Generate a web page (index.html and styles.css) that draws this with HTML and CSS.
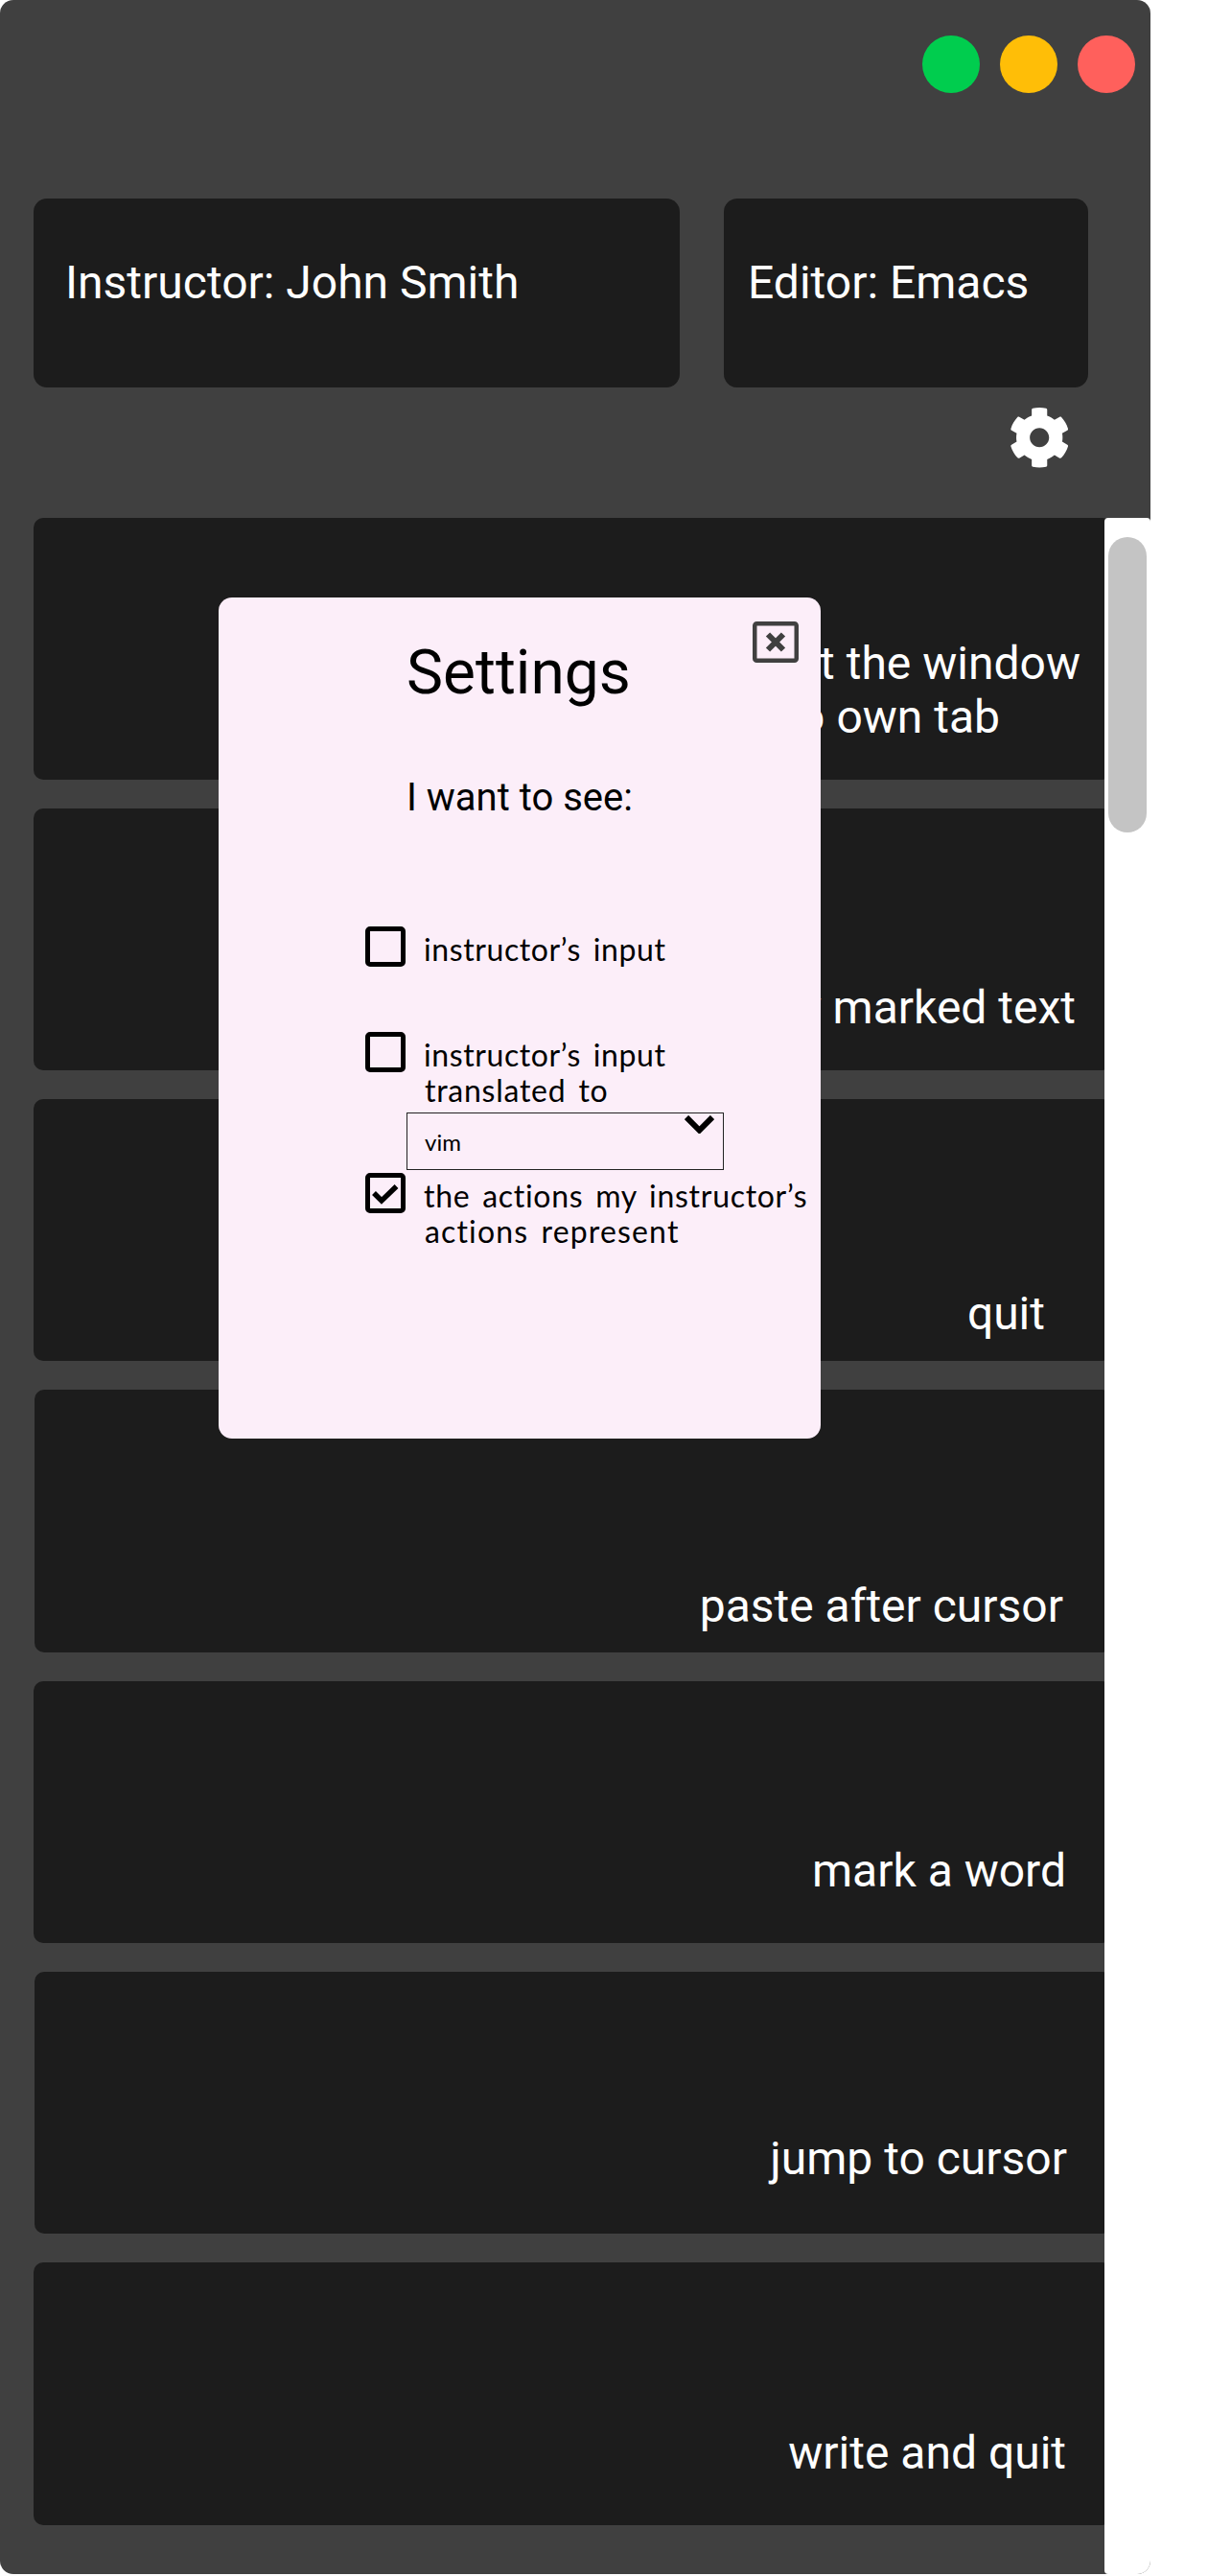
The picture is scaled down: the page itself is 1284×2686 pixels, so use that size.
FILE: index.html
```html
<!DOCTYPE html>
<html lang="en">
<head>
<meta charset="utf-8">
<title>Editor session</title>
<link rel="stylesheet" href="styles.css">
</head>
<body>
<main class="window">
  <div class="titlebar">
    <span class="dot dot-green"></span>
    <span class="dot dot-yellow"></span>
    <span class="dot dot-red"></span>
  </div>
  <header class="info">
    <div class="card card-instructor">Instructor: John Smith</div>
    <div class="card card-editor">Editor: Emacs</div>
  </header>
  <div class="toolbar">
    <svg class="gear" viewBox="0 0 512 512"><path fill="#fff" d="M487.4 315.7l-42.6-24.6c4.3-23.2 4.3-47 0-70.2l42.6-24.6c4.9-2.8 7.1-8.6 5.5-14-11.1-35.6-30-67.8-54.7-94.6-3.8-4.1-10-5.1-14.8-2.3L380.8 110c-17.9-15.4-38.5-27.3-60.8-35.1V25.8c0-5.6-3.9-10.5-9.4-11.7-36.7-8.2-74.3-7.8-109.2 0-5.5 1.2-9.4 6.1-9.4 11.7V75c-22.2 7.9-42.8 19.8-60.8 35.1L88.7 85.5c-4.9-2.8-11-1.9-14.8 2.3-24.7 26.7-43.6 58.9-54.7 94.6-1.7 5.4.6 11.2 5.5 14L67.3 221c-4.3 23.2-4.3 47 0 70.2l-42.6 24.6c-4.9 2.8-7.1 8.6-5.5 14 11.1 35.6 30 67.8 54.7 94.6 3.8 4.1 10 5.1 14.8 2.3l42.6-24.6c17.9 15.4 38.5 27.3 60.8 35.1v49.2c0 5.6 3.9 10.5 9.4 11.7 36.7 8.2 74.3 7.8 109.2 0 5.500-1.200 9.400-6.100 9.400-11.700v-49.200c22.200-7.900 42.800-19.800 60.800-35.100l42.600 24.600c4.900 2.800 11 1.900 14.800-2.300 24.700-26.700 43.600-58.900 54.700-94.600 1.500-5.500-.7-11.300-5.600-14.100zM256 336c-44.100 0-80-35.900-80-80s35.900-80 80-80 80 35.900 80 80-35.900 80-80 80z"/></svg>
  </div>
  <div class="content">
    <div class="list">
      <div class="row row-window"><span>put the window</span><span class="second-line">to own tab</span></div>
      <div class="row row-copy">copy marked text</div>
      <div class="row row-quit">quit</div>
      <div class="row row-paste">paste after cursor</div>
      <div class="row row-mark">mark a word</div>
      <div class="row row-jump">jump to cursor</div>
      <div class="row row-write">write and quit</div>
    </div>
    <div class="scrollbar"><div class="thumb"></div></div>
  </div>

  <section class="modal">
    <div class="modal-head">
      <h1 class="modal-title">Settings</h1>
      <svg class="close" viewBox="0 0 48 43" fill="none" stroke="#404040"><rect x="2.25" y="2.25" width="43.5" height="38.5" rx="2" stroke-width="4.5"/><path d="M16 13.500l16 16M32 13.500l-16 16" stroke-width="6"/></svg>
    </div>
    <p class="modal-sub">I want to see:</p>
    <div class="option">
      <span class="box"></span>
      <div class="label"><span class="l1">instructor’s input</span></div>
    </div>
    <div class="option option-translated">
      <span class="box"></span>
      <div class="label"><span class="l1">instructor’s input</span><span class="l2">translated to</span></div>
    </div>
    <div class="select">
      <span>vim</span>
      <svg class="chevron" viewBox="0 0 31 19" fill="none" stroke="#000"><path d="M2 2l13.500 13.500L29 2" stroke-width="6"/></svg>
    </div>
    <div class="option option-actions">
      <span class="box"><svg class="check" viewBox="0 0 32 32" fill="none" stroke="#000"><path d="M4 16l8 8L27.500 9" stroke-width="5.500"/></svg></span>
      <div class="label"><span class="l3">the actions my instructor’s</span><span class="l4">actions represent</span></div>
    </div>
  </section>
</main>
</body>
</html>
```
FILE: styles.css
```css
* { box-sizing: border-box; }

body {
  margin: 0;
  background: #fff;
  font-family: Roboto, "Liberation Sans", sans-serif;
}

.window {
  position: relative;
  width: 1200px;
  height: 2684px;
  background: #404040;
  border-radius: 14px;
  overflow: hidden;
}

.titlebar {
  display: flex;
  justify-content: flex-end;
  gap: 21px;
  height: 206.5px;
  padding: 37px 16px 0 0;
}

.dot { width: 60px; height: 60px; border-radius: 50%; }
.dot-green { background: #00cd4e; }
.dot-yellow { background: #ffbe07; }
.dot-red { background: #ff605c; }

.info {
  display: flex;
  gap: 46px;
  padding-left: 35px;
}

.card {
  height: 197px;
  padding-top: 60px;
  border-radius: 14px;
  background: #1c1c1c;
  color: #fff;
  font-size: 48px;
  line-height: 56px;
  white-space: nowrap;
}

.card-instructor { width: 674px; padding-left: 33px; }
.card-editor { width: 380px; padding-left: 25px; }

.toolbar {
  display: flex;
  justify-content: flex-end;
  height: 136px;
  padding: 20px 84px 0 0;
}

.gear { width: 64.4px; height: 64.4px; }

.content { display: flex; height: 2144.5px; }

.list {
  flex: 1;
  display: flex;
  flex-direction: column;
  gap: 30px;
  padding-left: 35px;
}

.row {
  display: flex;
  flex-direction: column;
  align-items: flex-end;
  justify-content: flex-end;
  height: 273.33px;
  margin-right: -8px;
  border-radius: 10px;
  background: #1c1c1c;
  color: #fff;
  font-size: 48px;
  line-height: 56px;
  white-space: nowrap;
}

.row-window { padding: 0 33px 37px 0; }
.second-line { margin-right: 84px; }
.row-copy { padding: 0 38px 37px 0; }
.row-quit { padding: 0 70px 21px 0; }
.row-paste { padding: 0 51px 20px 0; margin-left: 1px; }
.row-mark { padding: 0 48px 47px 0; }
.row-jump { padding: 0 47px 50px 0; margin-left: 1px; }
.row-write { padding: 0 48px 47px 0; }

.scrollbar {
  position: relative;
  width: 48px;
  padding: 20px 4px;
  border-radius: 4px 4px 0 4px;
  background: #fff;
}

.thumb { height: 308px; border-radius: 20px; background: #c4c4c4; }

.modal {
  position: absolute;
  top: 623px;
  left: 228px;
  width: 628px;
  height: 877px;
  border-radius: 14px;
  background: #fceef9;
  color: #000;
}

.modal-head {
  display: flex;
  justify-content: space-between;
  padding: 24px 23px 0 196px;
}

.modal-title {
  margin: 17px 0 0;
  font-size: 64px;
  font-weight: 400;
  line-height: 75px;
}

.close { width: 48px; height: 43px; margin-top: 0.5px; }

.modal-sub {
  margin: 69px 0 111px 196px;
  font-size: 40px;
  line-height: 47px;
}

.option {
  display: flex;
  gap: 19px;
  padding-left: 153px;
}

.option-translated { margin-top: 68px; }
.option-actions { margin-top: 3px; }

.box {
  flex: none;
  width: 42px;
  height: 42px;
  border: 5px solid #000;
  border-radius: 5px;
}

.check { display: block; width: 32px; height: 32px; }

.label {
  display: flex;
  flex-direction: column;
  align-items: flex-start;
  padding-top: 5px;
  font-family: Lato, "Liberation Sans", sans-serif;
  font-size: 32px;
  line-height: 37px;
  white-space: nowrap;
}

.l1 { letter-spacing: 0.6px; word-spacing: 4px; }
.l2 { margin-left: 1px; letter-spacing: 0.75px; word-spacing: 4px; }
.l3 { letter-spacing: 0.7px; word-spacing: 4px; }
.l4 { margin-left: 1px; letter-spacing: 1.15px; word-spacing: 4px; }

.select {
  display: flex;
  justify-content: space-between;
  width: 331px;
  height: 60px;
  margin: 5px 0 0 196px;
  padding: 0 9px 0 18px;
  border: 1px solid #222;
  font-family: Lato, "Liberation Sans", sans-serif;
  font-size: 24px;
  line-height: 60px;
}

.chevron { width: 31px; height: 19px; margin-top: 2px; }
```
